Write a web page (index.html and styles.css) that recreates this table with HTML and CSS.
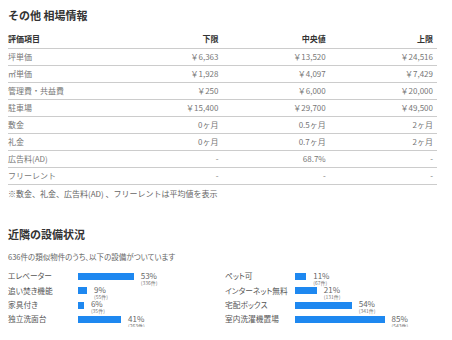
FILE: index.html
```html
<!DOCTYPE html>
<html lang="ja">
<head>
<meta charset="utf-8">
<link rel="stylesheet" href="styles.css">
</head>
<body>
<div class="page">
  <section class="market">
    <h2 class="title">その他 相場情報</h2>
    <table class="market-table">
      <thead>
        <tr><th class="name">評価項目</th><th>下限</th><th>中央値</th><th>上限</th></tr>
      </thead>
      <tbody>
        <tr><td class="name">坪単価</td><td>￥6,363</td><td>￥13,520</td><td>￥24,516</td></tr>
        <tr><td class="name">㎡単価</td><td>￥1,928</td><td>￥4,097</td><td>￥7,429</td></tr>
        <tr><td class="name">管理費・共益費</td><td>￥250</td><td>￥6,000</td><td>￥20,000</td></tr>
        <tr><td class="name">駐車場</td><td>￥15,400</td><td>￥29,700</td><td>￥49,500</td></tr>
        <tr><td class="name">敷金</td><td>0ヶ月</td><td>0.5ヶ月</td><td>2ヶ月</td></tr>
        <tr><td class="name">礼金</td><td>0ヶ月</td><td>0.7ヶ月</td><td>2ヶ月</td></tr>
        <tr><td class="name">広告料(AD)</td><td>-</td><td>68.7%</td><td>-</td></tr>
        <tr><td class="name">フリーレント</td><td>-</td><td>-</td><td>-</td></tr>
      </tbody>
    </table>
    <p class="note">※敷金、礼金、広告料(AD) 、フリーレントは平均値を表示</p>
  </section>
  <section class="facilities">
    <h2 class="title title-second">近隣の設備状況</h2>
    <p class="lead">636件の類似物件のうち、以下の設備がついています</p>
    <div class="facility-grid">
      <div class="facility"><span class="label">エレベーター</span><span class="bar" style="width:56.2px"></span><span class="value"><span class="pct">53%</span><span class="count">(336件)</span></span></div>
      <div class="facility"><span class="label">ペット可</span><span class="bar" style="width:11.7px"></span><span class="value"><span class="pct">11%</span><span class="count">(67件)</span></span></div>
      <div class="facility"><span class="label">追い焚き機能</span><span class="bar" style="width:9.5px"></span><span class="value"><span class="pct">9%</span><span class="count">(55件)</span></span></div>
      <div class="facility"><span class="label">インターネット無料</span><span class="bar" style="width:22.3px"></span><span class="value"><span class="pct">21%</span><span class="count">(131件)</span></span></div>
      <div class="facility"><span class="label">家具付き</span><span class="bar" style="width:6.4px"></span><span class="value"><span class="pct">6%</span><span class="count">(35件)</span></span></div>
      <div class="facility"><span class="label">宅配ボックス</span><span class="bar" style="width:57.2px"></span><span class="value"><span class="pct">54%</span><span class="count">(341件)</span></span></div>
      <div class="facility"><span class="label">独立洗面台</span><span class="bar" style="width:43.5px"></span><span class="value"><span class="pct">41%</span><span class="count">(263件)</span></span></div>
      <div class="facility"><span class="label">室内洗濯機置場</span><span class="bar" style="width:90.1px"></span><span class="value"><span class="pct">85%</span><span class="count">(543件)</span></span></div>
    </div>
  </section>
</div>
</body>
</html>
```

FILE: styles.css
```css
* { box-sizing: border-box; }
html, body { margin: 0; padding: 0; background: #fff; }
body {
  font-family: "Noto Sans CJK JP", "Noto Sans", sans-serif;
  color: #666;
}
.page {
  padding: 0 15px 0 8px;
  width: 452px;
}
.title {
  margin: 7px 0 0;
  font-size: 11px;
  line-height: 16px;
  font-weight: 700;
  color: #333;
}
.market-table {
  margin-top: 8px;
  width: 429px;
  border-collapse: collapse;
  table-layout: fixed;
  font-size: 8px;
}
.market-table th,
.market-table td {
  height: 17px;
  padding: 0 4px 0 0;
  text-align: right;
  border-bottom: 1px solid #cccccc;
  vertical-align: middle;
  line-height: 10px;
}
.market-table th {
  font-weight: 700;
  color: #333;
}
.market-table td { color: #777; }
.market-table .name { text-align: left; padding-left: 0; }
.note {
  margin: 3px 0 0;
  font-size: 8px;
  line-height: 12px;
  color: #666;
}
.title-second { margin-top: 26px; }
.lead {
  margin: 9.5px 0 0;
  font-size: 7.5px;
  line-height: 12px;
  color: #666;
  font-feature-settings: "palt";
}
.facility-grid {
  margin-top: 6.3px;
  display: grid;
  grid-template-columns: 217px 217px;
}
.facility {
  display: flex;
  align-items: center;
  height: 14.33px;
}
.label {
  width: 69.5px;
  flex: none;
  font-size: 7.7px;
  line-height: 10px;
  color: #555;
  white-space: nowrap;
  font-feature-settings: "palt";
}
.bar {
  flex: none;
  height: 7px;
  background: #1e88f0;
}
.value {
  align-self: flex-start;
  margin-top: 2.5px;
  margin-left: 7px;
  display: flex;
  flex-direction: column;
  color: #666;
  white-space: nowrap;
}
.pct {
  font-size: 8px;
  line-height: 8px;
}
.count {
  font-size: 5px;
  line-height: 5px;
  color: #777;
}
```
